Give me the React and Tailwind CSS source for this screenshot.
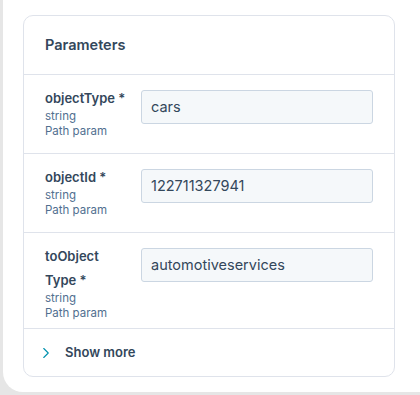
import React from 'react';
import { ChevronRight } from 'lucide-react';

const params = [
  { name: ['objectType *'], value: 'cars' },
  { name: ['objectId *'], value: '122711327941' },
  { name: ['toObject', 'Type *'], value: 'automotiveservices' },
];

function ParamRow({ param }) {
  return (
    <div className="flex min-h-[79px] border-b border-[#dfe3eb] px-[21px] pt-[11px] pb-[7px]">
      <div className="w-[96px] shrink-0">
        {param.name.map((line, i) => (
          <div key={i} className="text-[13px] font-semibold text-[#33475b] leading-[24px]">{line}</div>
        ))}
        <div className="text-[11.5px] text-[#516f90] leading-[15px] -mt-[1px]">string</div>
        <div className="text-[11.5px] text-[#516f90] leading-[15px]">Path param</div>
      </div>
      <div className="flex-1 pt-[4px]">
        <div className="h-[34px] bg-[#f5f8fa] border border-[#cbd6e2] rounded-[3px] flex items-center px-[9px] text-[14.5px] text-[#33475b]">
          {param.value}
        </div>
      </div>
    </div>
  );
}

export default function App() {
  return (
    <div className="w-[420px] h-[395px] bg-[#e6e6e6] pl-[3px] pb-[3px]" style={{ fontFamily: 'Inter, "Noto Sans", sans-serif' }}>
      <div className="h-full bg-white rounded-bl-[20px] pl-[20px] pt-[15px]">
        <div className="w-[372px] border border-[#dfe3eb] rounded-[10px] overflow-hidden">
          <div className="h-[59px] border-b border-[#dfe3eb] flex items-center px-[21px] text-[14.5px] font-semibold text-[#33475b]">
            Parameters
          </div>
          {params.map((p, i) => <ParamRow key={i} param={p} />)}
          <div className="h-[47px] flex items-center px-[13px] gap-[10px]">
            <ChevronRight size={18} strokeWidth={1.5} className="text-[#0091ae]" />
            <span className="text-[13px] font-semibold text-[#33475b]">Show more</span>
          </div>
        </div>
      </div>
    </div>
  );
}
